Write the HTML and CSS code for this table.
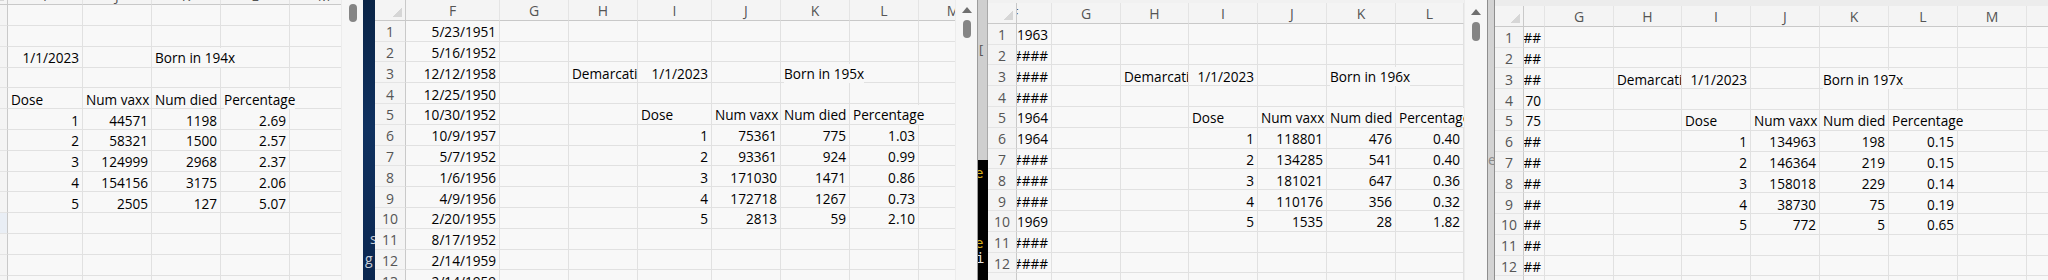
FILE: index.html
```html
<!DOCTYPE html>
<html lang="en">
<head>
  <meta charset="UTF-8" />
  <title>Born in 19xx - sheets</title>
  <link rel="stylesheet" href="styles.css">
</head>
<body>
  <div class="desk">
    <div class="win w1">
      <div class="sheet s1" id="s1"></div>
      <div class="vscroll"><span class="thumb"></span></div>
    </div>

    <div class="gap gap-blue">
      <span class="peek p-s">s</span>
      <span class="peek p-g">g</span>
    </div>

    <div class="win w2">
      <div class="sheet s2" id="s2"></div>
      <div class="vscroll"><span class="arrow"></span><span class="thumb"></span></div>
    </div>

    <div class="gap gap-term">
      <div class="term-top"><span class="bracket">[</span></div>
      <div class="term">
        <span class="t-e">e</span>
        <span class="t-e t-e2">e</span>
        <span class="t-i">i</span>
      </div>
    </div>

    <div class="win w3">
      <div class="sheet s3" id="s3"></div>
      <div class="vscroll"><span class="arrow"></span><span class="thumb"></span></div>
    </div>

    <div class="gap gap-grey"><span class="peek p-e">e</span></div>

    <div class="win w4">
      <div class="sheet s4" id="s4"></div>
    </div>
  </div>

  <script>
    // the same little summary block sits in every sheet
    function summary(decade, rows) {
      const cells = {
        H3: 'Demarcati', I3: '1/1/2023', K3: 'Born in ' + decade,
        I5: 'Dose', J5: 'Num vaxx', K5: 'Num died', L5: 'Percentage'
      };
      rows.forEach((r, i) => {
        const n = 6 + i;
        cells['I' + n] = String(i + 1);
        cells['J' + n] = r[0];
        cells['K' + n] = r[1];
        cells['L' + n] = r[2];
      });
      return cells;
    }

    function column(letter, values) {
      const cells = {};
      values.forEach((v, i) => { cells[letter + (i + 1)] = v; });
      return cells;
    }

    const sheets = [
      {
        id: 's1', rowHead: 31,
        cols: [['I', 75], ['J', 69], ['K', 69], ['L', 69], ['M', 69]],
        cells: summary('194x', [
          ['44571', '1198', '2.69'], ['58321', '1500', '2.57'], ['124999', '2968', '2.37'],
          ['154156', '3175', '2.06'], ['2505', '127', '5.07']
        ]),
        active: 11
      },
      {
        id: 's2', rowHead: 31,
        cols: [['F', 94], ['G', 69], ['H', 69], ['I', 74], ['J', 69], ['K', 69], ['L', 69], ['M', 69]],
        cells: Object.assign(column('F', [
          '5/23/1951', '5/16/1952', '12/12/1958', '12/25/1950', '10/30/1952', '10/9/1957',
          '5/7/1952', '1/6/1956', '4/9/1956', '2/20/1955', '8/17/1952', '2/14/1959', '2/14/1959'
        ]), summary('195x', [
          ['75361', '775', '1.03'], ['93361', '924', '0.99'], ['171030', '1471', '0.86'],
          ['172718', '1267', '0.73'], ['2813', '59', '2.10']
        ]))
      },
      {
        id: 's3', rowHead: 29,
        cols: [['F', 35], ['G', 69], ['H', 68], ['I', 69], ['J', 69], ['K', 69], ['L', 68]],
        cells: Object.assign(column('F', [
          '1963', '####', '####', '####', '1964', '1964', '####', '####', '####', '1969', '####', '####', '####'
        ]), summary('196x', [
          ['118801', '476', '0.40'], ['134285', '541', '0.40'], ['181021', '647', '0.36'],
          ['110176', '356', '0.32'], ['1535', '28', '1.82']
        ]))
      },
      {
        id: 's4', rowHead: 29,
        cols: [['F', 21], ['G', 69], ['H', 68], ['I', 69], ['J', 69], ['K', 69], ['L', 69], ['M', 69], ['N', 69]],
        cells: Object.assign(column('F', [
          '##', '##', '##', '70', '75', '##', '##', '##', '##', '##', '##', '##', '##'
        ]), summary('197x', [
          ['134963', '198', '0.15'], ['146364', '219', '0.15'], ['158018', '229', '0.14'],
          ['38730', '75', '0.19'], ['772', '5', '0.65']
        ]))
      }
    ];

    const ROWS = 14;

    function div(cls, text) {
      const el = document.createElement('div');
      el.className = cls;
      if (text !== undefined) {
        const span = document.createElement('span');
        span.textContent = text;
        el.appendChild(span);
      }
      return el;
    }

    function buildSheet(sheet) {
      const grid = div('grid');
      const widths = [sheet.rowHead].concat(sheet.cols.map(c => c[1]));
      grid.style.gridTemplateColumns = widths.map(w => w + 'px').join(' ');

      grid.appendChild(div('corner'));
      sheet.cols.forEach(c => grid.appendChild(div('ch', c[0])));

      for (let r = 1; r <= ROWS; r++) {
        const rh = div('rh', String(r));
        if (sheet.active === r) rh.classList.add('active');
        grid.appendChild(rh);

        sheet.cols.forEach((c, i) => {
          const value = sheet.cells[c[0] + r];
          if (value === undefined) {
            grid.appendChild(div('c'));
            return;
          }
          const numeric = /^[\d.\/#]+$/.test(value);
          const cell = div('c ' + (numeric ? 'num' : 'txt'), value);
          const next = sheet.cols[i + 1];
          if (!numeric && next && sheet.cells[next[0] + r] !== undefined) cell.classList.add('clip');
          if (!numeric && (!next || sheet.cells[next[0] + r] === undefined)) cell.classList.add('spill');
          grid.appendChild(cell);
        });
      }
      document.getElementById(sheet.id).appendChild(grid);
    }

    sheets.forEach(buildSheet);
  </script>
</body>
</html>
```

FILE: styles.css
```css
:root {
  --cell: #f8f8f8;
  --line: #e1e1e1;
  --head-line: #c9c9c9;
  --head-text: #555;
  --ink: #000;
  --row-h: 20.8px;
}

html, body {
  margin: 0;
  padding: 0;
  height: 280px;
  overflow: hidden;
  background: #0d2a4d;
}

body {
  font-family: "Open Sans", Lato, sans-serif;
  font-size: 13.6px;
  color: var(--ink);
}

.desk {
  display: flex;
  height: 280px;
  width: 2048px;
}

.win {
  display: flex;
  height: 280px;
  overflow: hidden;
  background: var(--cell);
  flex-shrink: 0;
}

.w1 { width: 363px; }
.w2 { width: 602px; }
.w3 { width: 499px; }
.w4 { width: 553px; }

.sheet {
  overflow: hidden;
  height: 280px;
  flex-shrink: 0;
}

.s1 { width: 341px; }
.s2 { width: 580px; }
.s3 { width: 476px; border-top: 3px solid #f1f1f1; height: 277px; }
.s4 { width: 553px; border-top: 6px solid #ececec; height: 274px; }

.grid {
  display: grid;
  grid-auto-rows: var(--row-h);
}

.s1 .grid {
  margin-top: -15.5px;
  margin-left: -23px;
}

/* cells */

.c {
  box-sizing: border-box;
  border-right: 1px solid var(--line);
  border-bottom: 1px solid var(--line);
  display: flex;
  align-items: center;
  padding: 2px 3px 0;
  white-space: nowrap;
  min-width: 0;
}

.c.num {
  justify-content: flex-end;
  overflow: hidden;
}

.c.clip {
  overflow: hidden;
}

.c.spill {
  position: relative;
  z-index: 1;
}

.c.spill span {
  background: var(--cell);
}

/* headers */

.corner, .ch, .rh {
  box-sizing: border-box;
  display: flex;
  align-items: center;
  justify-content: center;
  color: var(--head-text);
  background: #f4f4f4;
  padding-top: 2px;
  white-space: nowrap;
  overflow: hidden;
  font-size: 14px;
}

.ch {
  border-right: 1px solid #e4e4e4;
  border-bottom: 1px solid var(--head-line);
}

.rh {
  border-right: 1px solid var(--head-line);
  border-bottom: 1px solid #e4e4e4;
}

.rh.active {
  color: #3d86cf;
  background: #e9eef5;
}

.corner {
  border-right: 1px solid var(--head-line);
  border-bottom: 1px solid var(--head-line);
  background:
    linear-gradient(135deg, transparent 62%, #d6d6d6 62%) no-repeat right 3px bottom 3px / 13px 13px,
    #f4f4f4;
}

/* the F column in the last two sheets is cut off on the left */
.s3 .ch:nth-child(2),
.s4 .ch:nth-child(2) {
  justify-content: flex-start;
}

.s3 .ch:nth-child(2) span { margin-left: -6px; }
.s4 .ch:nth-child(2) span { margin-left: -14px; }

/* scrollbars */

.vscroll {
  flex: 1;
  display: flex;
  flex-direction: column;
  align-items: center;
  background: #f6f6f6;
  border-left: 1px solid #ececec;
}

.w1 .vscroll { padding-top: 4px; }
.w2 .vscroll { padding-top: 7px; }
.w3 .vscroll { padding-top: 9px; }

.arrow {
  width: 0;
  height: 0;
  border-left: 5px solid transparent;
  border-right: 5px solid transparent;
  border-bottom: 6px solid #6f6f6f;
  margin-bottom: 7px;
}

.thumb {
  width: 8px;
  height: 18px;
  border-radius: 4px;
  background: #858585;
}

.w3 .thumb { height: 19px; }

/* strips of desktop between the windows */

.gap {
  flex-shrink: 0;
  height: 280px;
  overflow: hidden;
  position: relative;
}

.gap-blue {
  width: 12px;
  background: linear-gradient(180deg, #0a2446 0%, #0f3160 45%, #0b2750 100%);
}

.gap-term {
  width: 11px;
  display: flex;
  flex-direction: column;
  border-left: 1px solid #9c9c9c;
  box-sizing: border-box;
}

.term-top {
  height: 160px;
  background: #cfcfcf;
  border-right: 1px solid #a9a9a9;
  color: #555;
  font-size: 13px;
}

.term {
  flex: 1;
  background: #000;
  font-family: "DejaVu Sans Mono", monospace;
  font-size: 14px;
  position: relative;
}

.gap-grey {
  width: 8px;
  background: #d3d3d3;
  border-left: 1px solid #8e8e8e;
  border-right: 1px solid #8e8e8e;
  box-sizing: border-box;
}

.peek {
  position: absolute;
  font-size: 14px;
}

.p-s { color: #c7cfd9; left: 7px; top: 229px; }
.p-g { color: #c7cfd9; left: 2px; top: 249px; }
.p-e { color: #8a8a8a; left: 0; top: 150px; }

.bracket { position: absolute; left: 1px; top: 40px; }

.t-e, .t-i {
  position: absolute;
  left: -3px;
}

.t-e { color: #d8b21a; top: 5px; }
.t-e2 { top: 75px; }
.t-i { color: #e8e8e8; top: 90px; left: -2px; }
```
